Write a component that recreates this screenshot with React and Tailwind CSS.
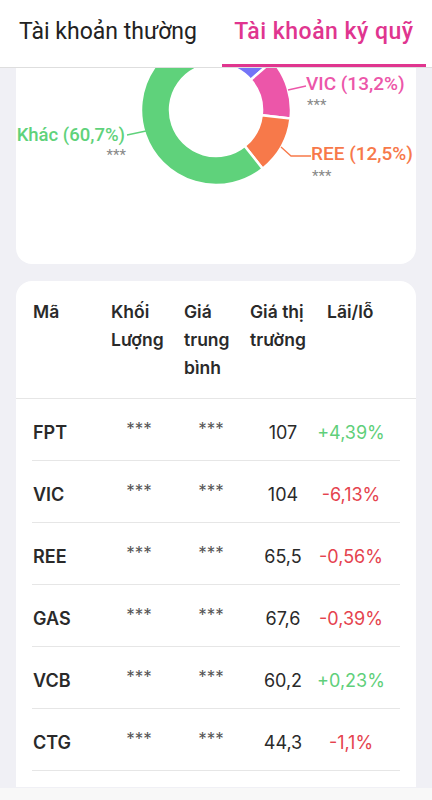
import React from 'react';

const CX = 216;
const CY = 110;
const R_OUT = 75;
const R_IN = 46;

// slices clockwise from 12 o'clock, angles in degrees
const slices = [
  { from: 0, to: 20, color: '#f5c543' },
  { from: 20, to: 49, color: '#7474f7' },
  { from: 49, to: 96.5, color: '#ec56a9' },
  { from: 96.5, to: 141.5, color: '#f7794a' },
  { from: 141.5, to: 360, color: '#5fd27b' },
];

const pt = (r, deg) => {
  const a = (deg * Math.PI) / 180;
  return [CX + r * Math.sin(a), CY - r * Math.cos(a)];
};

const arcPath = (from, to) => {
  const large = to - from > 180 ? 1 : 0;
  const [x1, y1] = pt(R_OUT, from);
  const [x2, y2] = pt(R_OUT, to);
  const [x3, y3] = pt(R_IN, to);
  const [x4, y4] = pt(R_IN, from);
  return `M${x1} ${y1} A${R_OUT} ${R_OUT} 0 ${large} 1 ${x2} ${y2} L${x3} ${y3} A${R_IN} ${R_IN} 0 ${large} 0 ${x4} ${y4} Z`;
};

const rows = [
  { code: 'FPT', price: '107', change: '+4,39%', up: true },
  { code: 'VIC', price: '104', change: '-6,13%', up: false },
  { code: 'REE', price: '65,5', change: '-0,56%', up: false },
  { code: 'GAS', price: '67,6', change: '-0,39%', up: false },
  { code: 'VCB', price: '60,2', change: '+0,23%', up: true },
  { code: 'CTG', price: '44,3', change: '-1,1%', up: false },
];

const cols = 'grid grid-cols-[73px_68px_76px_68px_68px]';

export default function App() {
  return (
    <div className="flex h-screen w-full flex-col overflow-hidden bg-[#f0f0f5] font-['Inter',sans-serif]">
      {/* Tabs */}
      <div className="flex h-[68px] flex-shrink-0 border-b border-[#dedede] bg-white font-['Roboto',sans-serif] text-[23px]">
        <div className="mx-[6px] flex flex-1 items-center justify-center pb-[2px] text-[#222]">
          Tài khoản thường
        </div>
        <div className="mx-[6px] flex flex-1 items-center justify-center border-b-[3px] border-[#e0358f] font-medium tracking-[0.5px] text-[#e0358f]">
          Tài khoản ký quỹ
        </div>
      </div>

      {/* Content */}
      <div className="flex-1 overflow-hidden px-4">
        {/* Chart card (scrolled) */}
        <div className="-mt-[60px] h-[256px] rounded-2xl bg-white">
          <svg width="400" height="256" viewBox="16 8 400 256" className="block">
            {slices.map((s, i) => (
              <path key={i} d={arcPath(s.from, s.to)} fill={s.color} stroke="#fff" strokeWidth="2.5" />
            ))}
            <g fontFamily="Roboto, sans-serif" fontWeight="500" fontSize="19">
              <polyline points="127,135 146,131" fill="none" stroke="#5fd27b" strokeWidth="1.3" />
              <text x="125" y="141" textAnchor="end" fontSize="18.5" fill="#5fd27b">Khác (60,7%)</text>
              <text x="126" y="160" textAnchor="end" fill="#888" fontSize="15" fontWeight="400">***</text>

              <polyline points="288,90 306,86" fill="none" stroke="#ec56a9" strokeWidth="1.3" />
              <text x="306" y="90" fill="#ec56a9">VIC (13,2%)</text>
              <text x="307" y="110" fill="#888" fontSize="15" fontWeight="400">***</text>

              <polyline points="281,147 291,156 311,156" fill="none" stroke="#f7794a" strokeWidth="1.3" />
              <text x="311" y="160" fill="#f7794a">REE (12,5%)</text>
              <text x="312" y="181" fill="#888" fontSize="15" fontWeight="400">***</text>
            </g>
          </svg>
        </div>

        {/* Holdings table */}
        <div className="mt-[17px] rounded-t-2xl bg-white pb-4">
          <div className={`${cols} border-b border-[#e6e6e6] px-4 pb-[16px] pt-[17px] text-[17.5px] font-semibold leading-[28px] text-[#2a2a2a]`}>
            <div className="pl-px">Mã</div>
            <div className="pl-[6px]">Khối<br />Lượng</div>
            <div className="pl-[11px]">Giá<br />trung<br />bình</div>
            <div className="pl-px">Giá thị<br />trường</div>
            <div className="whitespace-nowrap pl-[10px]">Lãi/lỗ</div>
          </div>
          {rows.map((r) => (
            <div key={r.code} className={`${cols} mx-4 h-[62px] items-center border-b border-[#e6e6e6] pt-[5px]`}>
              <div className="pl-px text-[18px] font-semibold text-[#2a2a2a]">{r.code}</div>
              <div className="pb-[5px] text-center text-[17px] text-[#555]">***</div>
              <div className="pb-[5px] text-center text-[17px] text-[#555]">***</div>
              <div className="text-center text-[18px] text-[#2a2a2a]">{r.price}</div>
              <div className={`whitespace-nowrap text-center text-[18px] ${r.up ? 'text-[#5fcf7a]' : 'text-[#e5434e]'}`}>{r.change}</div>
            </div>
          ))}
        </div>
      </div>

      {/* Bottom bar edge */}
      <div className="h-[12px] flex-shrink-0 bg-[#f8f8f8]" />
    </div>
  );
}
